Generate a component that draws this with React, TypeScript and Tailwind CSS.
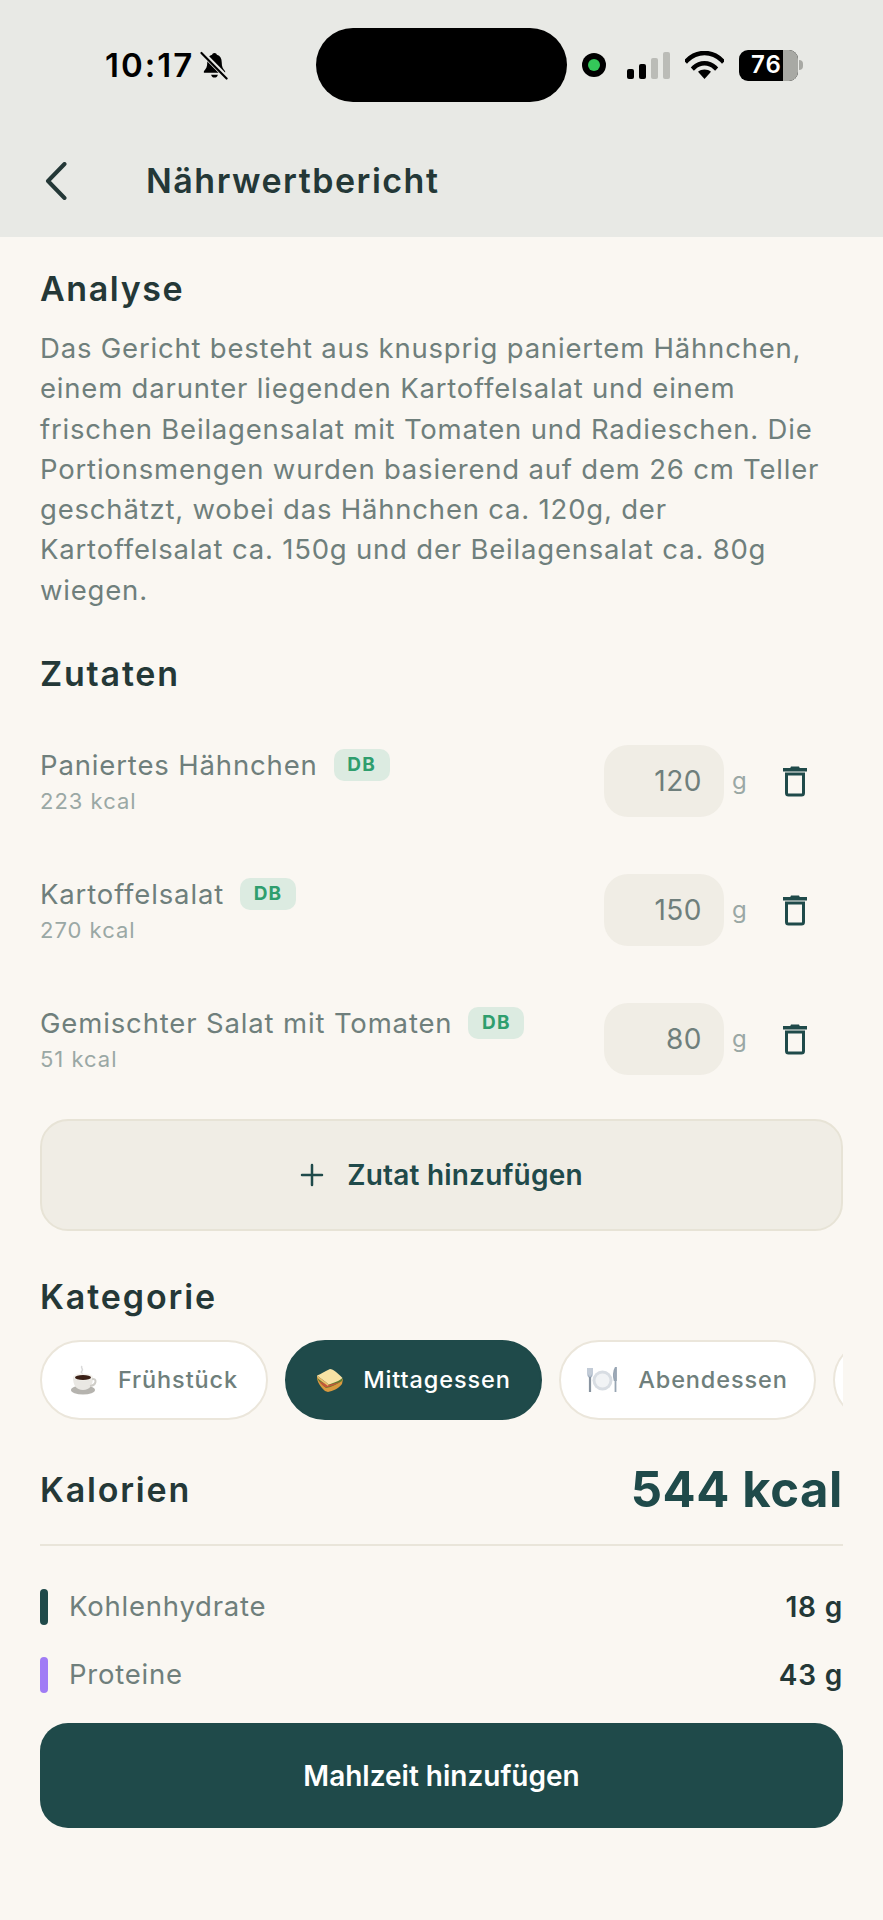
import type { ReactNode } from "react";

const ingredients = [
  { name: "Paniertes Hähnchen", kcal: "223 kcal", grams: "120" },
  { name: "Kartoffelsalat", kcal: "270 kcal", grams: "150" },
  { name: "Gemischter Salat mit Tomaten", kcal: "51 kcal", grams: "80" },
];

function BellOff() {
  return (
    <svg width="29" height="31" viewBox="0 0 30 30" fill="none">
      <path d="M15 2c-1.400 0-2.300.9-2.500 2-3.500 1-5 4-5 8 0 4-1 6.500-3.500 9v1.500h22V21c-2.500-2.500-3.500-5-3.500-9 0-4-1.500-7-5-8-.2-1.100-1.100-2-2.500-2z" fill="#000" />
      <path d="M11.500 24.500c.5 2 1.800 3 3.500 3s3-1 3.500-3z" fill="#000" />
      <path d="M2 1.500 28 28" stroke="#E8E9E5" strokeWidth="5" />
      <path d="M1.500 2 27.500 28.500" stroke="#000" strokeWidth="2.200" strokeLinecap="round" />
    </svg>
  );
}

function Wifi() {
  return (
    <svg width="39" height="28" viewBox="0 0 39 28" fill="none">
      <path d="M2 9.500C7 4.500 13 2 19.500 2S32 4.500 37 9.500" stroke="#000" strokeWidth="4.500" strokeLinecap="square" />
      <path d="M9 16.500c3-2.800 6.500-4.200 10.500-4.200s7.500 1.400 10.500 4.200" stroke="#000" strokeWidth="4.500" strokeLinecap="square" />
      <path d="M13 20.800c1.800-1.600 4-2.400 6.500-2.400s4.700.8 6.500 2.400L19.500 28z" fill="#000" />
    </svg>
  );
}

function Trash() {
  return (
    <svg width="24" height="31" viewBox="0 0 24 31" fill="none">
      <path d="M7 2.500 8 0.500h8l1 2z" fill="#1F4A4A" />
      <rect x="0" y="2" width="24" height="3.500" fill="#1F4A4A" />
      <path d="M3.500 8h17v19a2 2 0 0 1-2 2h-13a2 2 0 0 1-2-2z" stroke="#1F4A4A" strokeWidth="3" />
    </svg>
  );
}

function Coffee() {
  return (
    <svg width="28" height="30" viewBox="0 0 28 30" fill="none">
      <path d="M12 1c-2 2 2 3 0 5s1 2 0 3" stroke="#d9d9d9" strokeWidth="1.500" />
      <ellipse cx="13" cy="25" rx="12" ry="4.500" fill="#b5b3ae" />
      <path d="M3 12h20c0 8-3 13-10 13S3 20 3 12z" fill="#e9e7e3" />
      <path d="M22 14c5-1 5 6-2 7" stroke="#cfcdc8" strokeWidth="2" />
      <ellipse cx="13" cy="12" rx="10" ry="3.500" fill="#f4f2ee" />
      <ellipse cx="13" cy="12.500" rx="8" ry="2.600" fill="#3a2016" />
    </svg>
  );
}

function Sandwich() {
  return (
    <svg width="27" height="24" viewBox="0 0 27 24" fill="none">
      <path d="M1 9c0 5 3 9 8 14l3 1c5-1 10-3 14-8l1-5-15 6z" fill="#d99a3f" />
      <path d="M1.500 10c1 3 4 7 8.500 10 6-1 11-4 16-7l.5-3-14 6z" fill="#5f7d2e" />
      <path d="M3 13c1.500 2 4 5 7 6.500 5-1 10-3 14-5.500l-12 3z" fill="#c4553a" />
      <path d="M1 7.500C5 6 9 3 14 1c3 0 9 5 12.500 9-3 3-9 5-14 6.500C9 13 4 10 1 7.500z" fill="#f8e2a4" />
      <path d="M1 7.500c3 2.500 8 5.500 11.500 9L12 18C8 15 3 12 1 9z" fill="#edbd6a" />
    </svg>
  );
}

function Plate() {
  return (
    <svg width="31" height="26" viewBox="0 0 31 26" fill="none">
      <circle cx="15.500" cy="13.500" r="10" fill="#d8dde3" />
      <circle cx="15.500" cy="13.500" r="7" fill="#f1f3f5" />
      <path d="M1 1v6c0 2 1 3 2 3s2-1 2-3V1M3 1v24" stroke="#a9b6c6" strokeWidth="1.400" />
      <path d="M3 10v15" stroke="#8994a0" strokeWidth="2.200" />
      <path d="M28.500 1c-2 3-2 9-1 12h1.500V1zM28.500 13v12" fill="#b6c2cf" stroke="#98a5b3" strokeWidth="1.800" />
    </svg>
  );
}

function Chip({ icon, label, active, width }: { icon: ReactNode; label: string; active?: boolean; width: string }) {
  return (
    <div
      className={`${width} h-[80px] shrink-0 flex items-center justify-center gap-[20px] rounded-full border-2 ${
        active ? "bg-[#1F4A4A] border-[#1F4A4A] text-white" : "bg-white border-[#EBE6DB] text-[#6F7F7C]"
      }`}
    >
      {icon}
      <span className="text-[23.500px] font-medium tracking-[0.9px]">{label}</span>
    </div>
  );
}

export default function App() {
  return (
    <div className="w-[883px] h-[1920px] overflow-hidden bg-[#FAF7F2] font-['Inter',sans-serif]">
      {/* Header */}
      <div className="h-[237px] bg-[#E8E9E5]">
        <div className="flex items-center pt-[28px] h-[102px]">
          <div className="w-[316px] pl-[105px] flex items-center gap-[6px]">
            <span className="text-[33px] leading-none font-semibold text-black tracking-[2px]">10:17</span>
            <BellOff />
          </div>
          <div className="w-[251px] h-[74px] rounded-[37px] bg-black" />
          <div className="ml-[15px] w-[24px] h-[24px] rounded-full bg-black flex items-center justify-center">
            <div className="w-[12px] h-[12px] rounded-full bg-[#34C759]" />
          </div>
          <div className="ml-[21px] flex items-end gap-[5px]">
            <div className="w-[7px] h-[10px] rounded-[2px] bg-black" />
            <div className="w-[7px] h-[15px] rounded-[2px] bg-black" />
            <div className="w-[7px] h-[21px] rounded-[2px] bg-[#BBBCB7]" />
            <div className="w-[7px] h-[27px] rounded-[2px] bg-[#BBBCB7]" />
          </div>
          <div className="ml-[15px]">
            <Wifi />
          </div>
          <div className="ml-[15px] flex items-center">
            <div className="relative w-[59px] h-[31px] rounded-[9px] bg-black overflow-hidden flex items-center">
              <div className="absolute right-0 top-0 bottom-0 w-[15px] bg-[#A8A9A4]" />
              <span className="relative pl-[12px] text-[24px] leading-none font-semibold text-white tracking-[1px]">76</span>
            </div>
            <div className="ml-[1px] w-[4px] h-[10px] rounded-r-full bg-[#A8A9A4]" />
          </div>
        </div>
        <div className="flex items-center mt-[58px] pl-[45px]">
          <svg width="22" height="38" viewBox="0 0 22 38" fill="none">
            <path d="M19.500 2 3 19l16.500 17" stroke="#243837" strokeWidth="4" strokeLinecap="round" strokeLinejoin="round" />
          </svg>
          <span className="ml-[79px] text-[34px] leading-[42px] font-semibold text-[#243837] tracking-[1.500px]">Nährwertbericht</span>
        </div>
      </div>

      {/* Content */}
      <div className="pl-[40px]">
        <h2 className="mt-[30px] text-[34px] leading-[44px] font-semibold text-[#243837] tracking-[1.600px]">Analyse</h2>
        <p className="mt-[17px] w-[810px] text-[27.500px] leading-[40.300px] text-[#6F7F7C] tracking-[0.800px]">
          Das Gericht besteht aus knusprig paniertem Hähnchen,
          <br />
          einem darunter liegenden Kartoffelsalat und einem
          <br />
          frischen Beilagensalat mit Tomaten und Radieschen. Die
          <br />
          Portionsmengen wurden basierend auf dem 26 cm Teller
          <br />
          geschätzt, wobei das Hähnchen ca. 120g, der
          <br />
          Kartoffelsalat ca. 150g und der Beilagensalat ca. 80g
          <br />
          wiegen.
        </p>

        <h2 className="mt-[42px] text-[34px] leading-[44px] font-semibold text-[#243837] tracking-[1.800px]">Zutaten</h2>

        <div className="mt-[49px] flex flex-col gap-[57px]">
          {ingredients.map((item) => (
            <div key={item.name} className="flex items-center h-[72px]">
              <div className="w-[564px]">
                <div className="flex items-center gap-[16px]">
                  <span className="text-[27.500px] leading-[36px] text-[#6F7F7C] tracking-[0.850px]">{item.name}</span>
                  <span className="w-[56px] h-[32px] rounded-[10px] bg-[#DCEBE1] flex items-center justify-center text-[19px] font-bold text-[#2F9E6E] tracking-[1.200px]">
                    DB
                  </span>
                </div>
                <div className="mt-[4px] text-[22px] leading-[28px] text-[#9AA8A5] tracking-[1px]">{item.kcal}</div>
              </div>
              <div className="w-[120px] h-[72px] rounded-[24px] bg-[#F0EDE5] flex items-center justify-end pr-[22px] text-[28px] text-[#6F7F7C] tracking-[0.5px]">
                {item.grams}
              </div>
              <span className="ml-[8px] text-[24px] text-[#9AA8A5]">g</span>
              <div className="ml-[36px]">
                <Trash />
              </div>
            </div>
          ))}
        </div>

        <div className="mt-[44px] w-[803px] h-[112px] rounded-[28px] bg-[#F0EDE5] border-2 border-[#E7E3D6] flex items-center justify-center gap-[23px]">
          <svg width="24" height="24" viewBox="0 0 24 24" fill="none">
            <path d="M12 2v20M2 12h20" stroke="#1F4A4A" strokeWidth="2.500" strokeLinecap="round" />
          </svg>
          <span className="text-[28px] font-semibold text-[#1F4A4A] tracking-[0.2px]">Zutat hinzufügen</span>
        </div>

        <h2 className="mt-[44px] text-[34px] leading-[44px] font-semibold text-[#243837] tracking-[1.900px]">Kategorie</h2>

        <div className="mt-[21px] w-[803px] overflow-hidden flex gap-[17px]">
          <Chip icon={<Coffee />} label="Frühstück" width="w-[228px]" />
          <Chip icon={<Sandwich />} label="Mittagessen" active width="w-[257px]" />
          <Chip icon={<Plate />} label="Abendessen" width="w-[257px]" />
          <div className="w-[200px] h-[80px] shrink-0 rounded-full border-2 border-[#EBE6DB] bg-white" />
        </div>

        <div className="mt-[44px] w-[803px] pb-[28px] border-b-2 border-[#E9E5DA] flex items-center justify-between">
          <span className="text-[34px] leading-[44px] font-semibold text-[#243837] tracking-[1.800px]">Kalorien</span>
          <span className="text-[49px] leading-[52px] font-bold text-[#1F4A4A] tracking-[0.6px]">544 kcal</span>
        </div>

        <div className="mt-[43px] w-[803px] flex flex-col gap-[32px]">
          <div className="flex items-center h-[36px]">
            <div className="w-[8px] h-[36px] rounded-full bg-[#1F4A4A]" />
            <span className="ml-[21px] text-[27.500px] text-[#6F7F7C] tracking-[0.780px]">Kohlenhydrate</span>
            <span className="ml-auto text-[28px] font-semibold text-[#243837] tracking-[0.8px]">18 g</span>
          </div>
          <div className="flex items-center h-[36px]">
            <div className="w-[8px] h-[36px] rounded-full bg-[#A07CF5]" />
            <span className="ml-[21px] text-[27.500px] text-[#6F7F7C] tracking-[0.780px]">Proteine</span>
            <span className="ml-auto text-[28px] font-semibold text-[#243837] tracking-[0.8px]">43 g</span>
          </div>
        </div>

        <div className="mt-[30px] w-[803px] h-[105px] rounded-[28px] bg-[#1F4A4A] flex items-center justify-center text-[28px] font-semibold text-white">
          Mahlzeit hinzufügen
        </div>
      </div>
    </div>
  );
}
